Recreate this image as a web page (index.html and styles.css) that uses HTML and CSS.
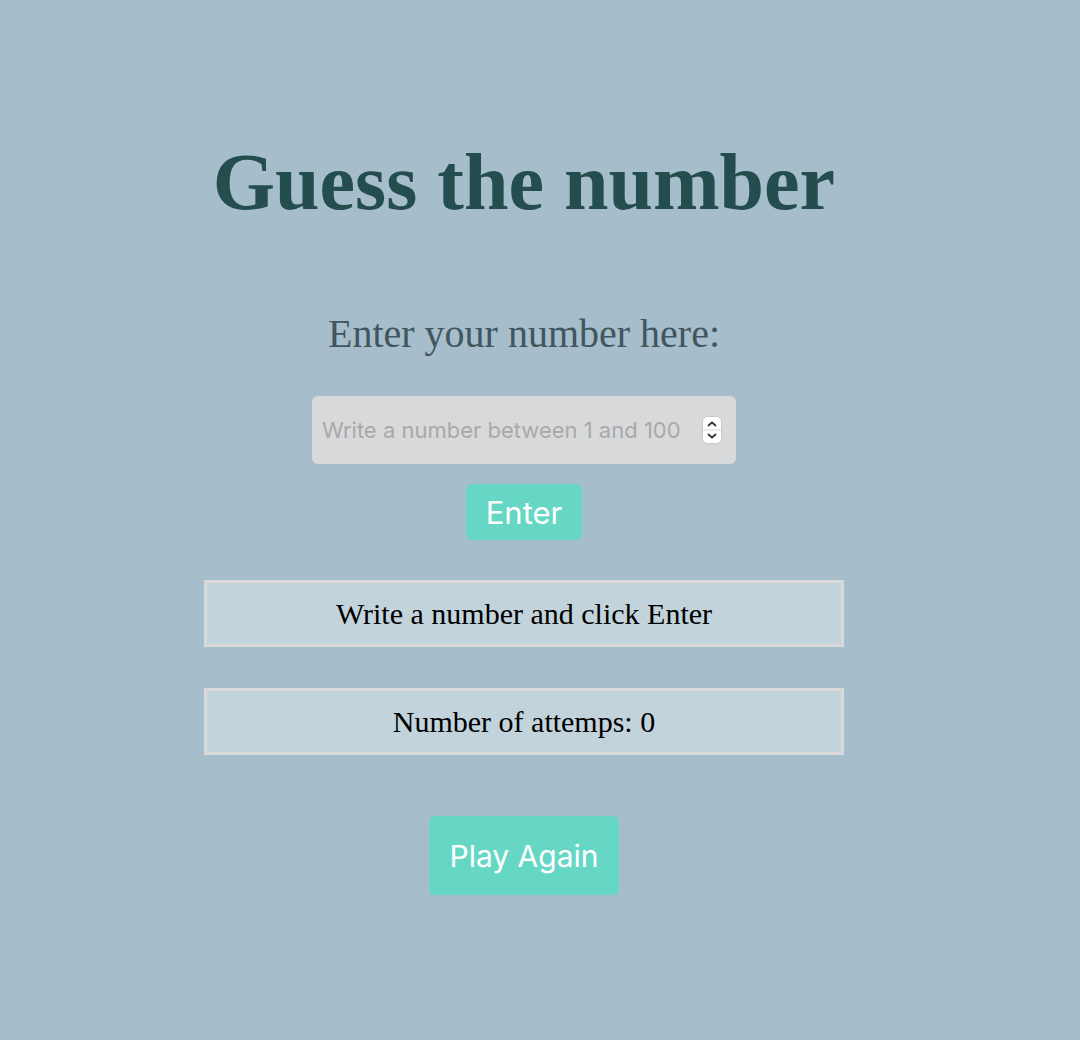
FILE: index.html
```html
<!DOCTYPE html>
<html lang="en">
<head>
<meta charset="utf-8">
<title>Guess the number</title>
<link rel="stylesheet" href="styles.css">
</head>
<body>
<main class="game">
  <h1 class="title">Guess the number</h1>
  <h2 class="label">Enter your number here:</h2>
  <div class="field">
    <span class="placeholder">Write a number between 1 and 100</span>
    <span class="spinner">
      <svg width="20" height="28" viewBox="0 0 20 28">
        <rect x="0.5" y="0.5" width="19" height="27" rx="5" fill="#fff" stroke="#c9c9c9"/>
        <line x1="1" y1="14" x2="19" y2="14" stroke="#d5d5d5"/>
        <path d="M6.5 9.5 L10 6.5 L13.5 9.5" fill="none" stroke="#333" stroke-width="1.8" stroke-linecap="round" stroke-linejoin="round"/>
        <path d="M6.5 18.5 L10 21.5 L13.5 18.5" fill="none" stroke="#333" stroke-width="1.8" stroke-linecap="round" stroke-linejoin="round"/>
      </svg>
    </span>
  </div>
  <button class="btn btn-enter">Enter</button>
  <div class="box box-msg">Write a number and click Enter</div>
  <div class="box box-count">Number of attemps: 0</div>
  <button class="btn btn-again">Play Again</button>
</main>
</body>
</html>
```
FILE: styles.css
```css
html, body {
  margin: 0;
  padding: 0;
}
body {
  background: #a6bdcb;
  font-family: "Liberation Serif", "Times New Roman", serif;
  min-height: 1040px;
}
.game {
  width: 1048px;
  display: flex;
  flex-direction: column;
  align-items: center;
}
.title {
  margin: 136px 0 0;
  font-size: 80px;
  line-height: 92px;
  font-weight: bold;
  color: #234d4e;
}
.label {
  margin: 84px 0 0;
  font-size: 40px;
  line-height: 44px;
  font-weight: normal;
  color: #41565f;
}
.field {
  margin-top: 40px;
  width: 424px;
  height: 68px;
  box-sizing: border-box;
  background: #d8d9db;
  border-radius: 6px;
  display: flex;
  align-items: center;
  padding: 0 14px 0 10px;
  gap: 10px;
}
.placeholder {
  flex: 1;
  font-family: Inter, "Noto Sans", sans-serif;
  font-size: 22px;
  color: #a9a9a9;
  white-space: nowrap;
}
.spinner {
  display: flex;
}
.btn {
  border: none;
  background: #66d7c5;
  color: #fff;
  font-family: Inter, "Noto Sans", sans-serif;
  border-radius: 6px;
  cursor: pointer;
}
.btn-enter {
  margin-top: 20px;
  width: 116px;
  height: 56px;
  font-size: 31px;
}
.box {
  width: 640px;
  height: 67px;
  box-sizing: border-box;
  border: 3px solid #d9d9d9;
  background: #c2d3db;
  display: flex;
  align-items: center;
  justify-content: center;
  font-size: 30px;
  color: #000;
}
.box-msg {
  margin-top: 40px;
}
.box-count {
  margin-top: 41px;
}
.btn-again {
  margin-top: 61px;
  width: 190px;
  height: 79px;
  font-size: 30px;
}
```
